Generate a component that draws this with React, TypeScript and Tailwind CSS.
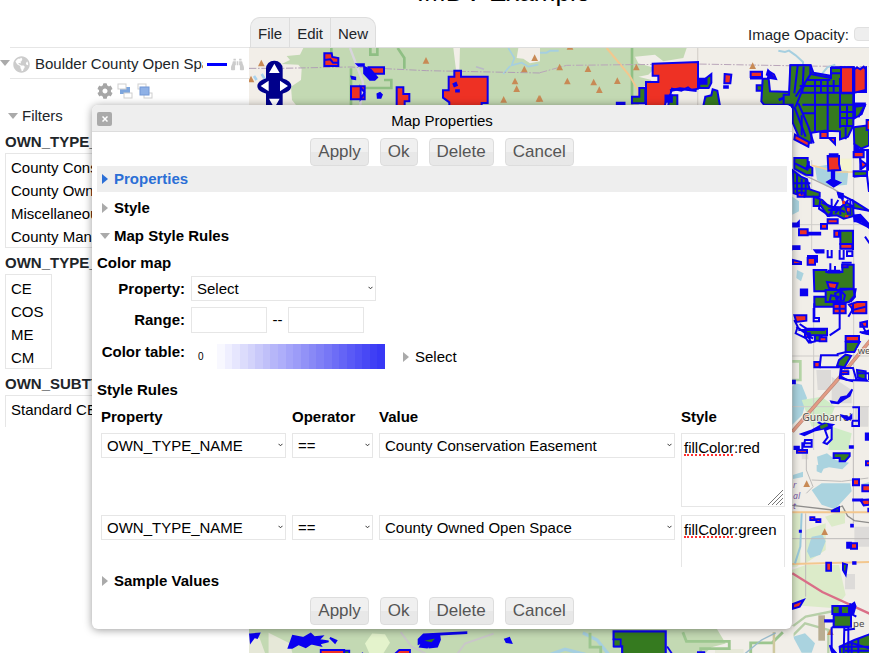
import React from 'react';
import { FaCog, FaGlobeAmericas, FaBinoculars } from 'react-icons/fa';

const BLUE = '#0a00f0';
const RED = '#ee3124';
const GREEN = '#357a1f';

function Caret({ open, color = '#aaaaaa' }: { open?: boolean; color?: string }) {
  return (
    <svg width="10" height="10" viewBox="0 0 10 10" className="shrink-0" fill={color} aria-hidden="true">
      {open ? <path d="M0 2h10L5 8z" /> : <path d="M2 0v10l6-5z" />}
    </svg>
  );
}

function Peaks({ at, s = 1 }: { at: number[][]; s?: number }) {
  return (
    <g fill="#c88a55">
      {at.map(([x, y]) => (
        <path key={`${x}-${y}`} d={`M${x} ${y - 11 * s}l${10 * s} ${20 * s}h${-20 * s}z`} />
      ))}
    </g>
  );
}

function NorthMap() {
  return (
    <g>
      <g transform="translate(240 0) scale(.33333)">
        <path d="M27 144H1400V330H27z" fill="#c3d9b3" />
        <path d="M27 144H190l-10 20-40 4 10 12-25 12 50 2 10 12-2 34-30 20 3 40 24 30H27z" fill="#f2eee8" />
        <path d="M640 144h20l-2 65h-10zM835 144h65v40l-30 6-20-14-20-2z" fill="#f2eee8" />
        <path d="M805 144l18 30-8 22 30-8 20 12 30-6M790 222l20-24" fill="none" stroke="#a6cfe0" strokeWidth="5" />
        <path d="M330 144l38 100 2 20-12 66" fill="none" stroke="#d8d5dc" strokeWidth="7" />
        <path d="M274 144v44M333 205v110M391 144v20h21v-20M473 144l20 30v32M366 264h88v-24h-22" fill="none" stroke="#8fbf84" strokeWidth="8" />
        <path d="M27 205H120L330 201 560 212 900 219" fill="none" stroke="#b09fb5" strokeWidth="3" strokeDasharray="22 5 5 5" />
        <path d="M708 200l24 8" stroke="#b8b9c6" strokeWidth="5" />
        <path d="M42 228l8 12M65 222l10 16" stroke="#a8d2ee" strokeWidth="8" />
        <Peaks at={[[64, 190], [33, 238], [558, 182], [884, 174], [853, 208], [825, 244], [830, 267], [791, 299], [897, 296]]} />
        <g fill={RED} stroke={BLUE} strokeWidth="6">
          <path d="M253 160h22l2 11 18 3v24h-42zM253 180l18-2 8 10h16" />
          <path d="M386 202h46v19h-40zM333 259h41v39h-41zM362 262v34l12-18z" />
          <path d="M470 262h20v20h18v22h-14v14h-24z" />
          <path d="M643 212h20v18h80v79h-18v12H628v-14l-19-14v-22h17v-41h17z" />
        </g>
        <g fill={BLUE} stroke={BLUE} strokeWidth="5">
          <path d="M350 192h22v6h-16zM372 200l20 8 20 24-8 8h-14l-18-20zM334 230l12 2v6l-10-2zM412 282l8-4 6 6-4 10h-9zM640 252l8-4 3 8-8 3zM648 270h9v5h-9z" />
        </g>
        <g fill="#00008b">
          <rect x="78" y="182" width="50" height="160" rx="24" />
          <ellipse cx="103" cy="258" rx="51" ry="27" />
        </g>
        <path d="M103 191l16 28H87zM62 258l24-16v32zM144 258l-24-16v32zM87 296h32l-16 28z" fill="#fff" />
      </g>
      <g transform="translate(540 0) scale(.33333)">
        <path d="M0 144H1000V330H0z" fill="#f1eee8" />
        <path d="M0 144H440l-10 30-60 10-25-20-60 6 10 20 50 14-20 20-30 6 40 10-35 30-5 60H0z" fill="#c3d9b3" />
        <path d="M276 144v170" stroke="#8fbf84" strokeWidth="8" />
        <path d="M200 144l68 82 28 48-10 40" fill="none" stroke="#f3c78e" strokeWidth="6" />
        <path d="M473 144v180" stroke="#d9d5cf" strokeWidth="4" />
        <path d="M0 218l80-22 390-4 320 6 200 2" fill="none" stroke="#b9a5b9" strokeWidth="3" strokeDasharray="22 5 5 5" />
        <path d="M0 158h20l10-6h26M715 152l20 4 12-4 20 14 22 20v10M846 222l16-20 24-8" fill="none" stroke="#a6cfe0" strokeWidth="6" />
        <Peaks at={[[90, 140], [59, 202], [144, 207], [289, 202], [82, 244], [161, 247], [232, 243], [178, 270], [0, 296], [638, 198]]} />
        <g stroke={BLUE} strokeWidth="6">
          <path d="M338 191l136-5v80l-20 4-10-8-20 10-28-6-6 22-10 8-8 30h-54v-80h37v-19h-17z" fill={RED} />
          <path d="M554 222l20 2-3 26h-18zM632 215h34v16h-34zM688 215l14 8 6 14-24-4z" fill={RED} />
          <path d="M276 290h22v-26h18v46h-40zM390 286h22v34h-28zM478 238l18-2 18-14v26l-8 16h-28zM496 290l18-4 4-18 14 4 8 46h-50z" fill={GREEN} />
          <path d="M668 236h18l4 38 60 2v38H672l-8-10zM650 256h16v16h-16z" fill={GREEN} />
          <path d="M752 196h60l8 22 56 10v-26h26v74h40v54H764l-16-18z" fill={GREEN} />
          <path d="M770 200l-8 110M790 198l-8 120M815 215l-50 70M782 240h90M790 262h76M866 228v90M784 280h160" fill="none" />
          <path d="M902 202h40v74h-40zM946 210l32-8v74h-32z" fill={RED} />
        </g>
        <path d="M230 308h24v8h-24zM552 258h12v6h-12zM684 210l18 24-22-10zM630 236h36M476 236h24v16h-24zM376 286h20v20h-20z" fill={BLUE} stroke={BLUE} strokeWidth="5" />
        <path d="M390 272l30-6 50 6M716 300l50-20" fill="none" stroke={BLUE} strokeWidth="8" />
      </g>
    </g>
  );
}

function EastMap() {
  return (
    <g>
      <g transform="translate(785 50) scale(.33333)">
        <path d="M24 160H256V600H24z" fill="#f1eee8" />
        <path d="M206 200v400M80 330v270M22 524h230" stroke="#d0cdca" strokeWidth="3" fill="none" />
        <path d="M90 350l40-6 60 20-4 40-60 6-30-20zM22 440l20 14v30l-20 10z" fill="#aad3df" />
        <path d="M166 326h34v36h-34z" fill="#f4f3cf" />
        <path d="M80 346l80 20 90 0" stroke="#f5cf98" strokeWidth="5" fill="none" />
        <path d="M24 360l120 56 110 70" stroke="#aaa8a8" strokeWidth="4" fill="none" />
        <g fill={GREEN} stroke={BLUE} strokeWidth="6">
          <path d="M16 46h60v26l62 12V54h32v76h35v96l-16 34-24 8v-24l-46-2-40 6v30h-30l-26-60V164H-4v-30h16z" />
          <path d="M38 48L28 130M56 50l-4 80M76 74l-44 66M90 90v158M128 90v154M165 84v150M46 128h160M52 164h152M50 190h40M168 186h36M44 108h120M66 90h70M138 70h30M186 168v60M168 204h36M168 228h36M60 100l-28 70M40 160l30 70 16 50M28 170l34 90M146 90v38M108 90v36" fill="none" />
          <path d="M210 170l30-4-10 26-20 12zM206 232l46-6v60l-24 10-20-14zM28 324h40v22l14 8v22l-20-2-34-18z" />
          <path d="M24 362l24 18 18 8 8 30 30 10v12H60L26 430zM86 440l26 10 20 20 34 2 20-14 18 12 2 28-30 8-20-10-28 2-20-30H86zM204 452l48 30-46-8zM166 542h38v40h-38zM206 364h40v14h-40z" />
        </g>
        <g fill={RED} stroke={BLUE} strokeWidth="6">
          <path d="M168 52h36v76h-36zM208 58l8-6 10 6 10-8 6 8v62l-34 8zM30 254l42 22-2 14-42-22zM106 246h22v18h-22zM132 264h18v18zM128 318h34v24l4 18-36 2zM206 306h30v16h-30zM226 330l20 14-16 12zM38 428h20v12H38zM128 508h30v12h-30zM42 538h26v18H42zM108 522h18v14h-18zM148 542h14v18h-14zM166 582h36v14h-36zM245 210h12v30h-12z" />
        </g>
        <g fill={BLUE} stroke={BLUE} strokeWidth="5">
          <path d="M134 312h24v8h-24zM140 362v26l-14 8 20 14 20-12-18-8v-28zM24 520h12l6-6v16H24zM70 548h36v6H70zM24 588h20v10H24zM206 496l20-2 24 26v12l-22-18h-20zM208 284l16 16-16 6zM246 300h6v60h-6zM158 428l16 4v14l-12-4zM206 160h34v6h-34zM72 334v20h-8z" />
        </g>
        <path d="M30 340l40 20M36 370v60M50 386v50M26 400h50M26 416h48M62 390v48M140 446v50M160 450l-30 50M170 444l20 50M190 450l-40 40M110 458l70 28M158 430l46 22M196 446v50M178 470h26M106 450l-4 26 30 20M130 480h36v14M226 320v40M206 380l40-4 6 50M208 510l44 22M240 166l-20 36M220 300h32M50 196v60M182 232v36M240 560l14 20M204 540v60" fill="none" stroke={BLUE} strokeWidth="6" />
        <path d="M172 452h8v10h-8zM186 474h8v10h-8zM180 496h10v6h-10z" fill={RED} />
      </g>
      <g transform="translate(785 250) scale(.33333)">
        <path d="M24 0H256V610H24z" fill="#f1eee8" />
        <path d="M94 360h44v60h-40zM140 380l60 40v40h-60zM210 470l40 0v60h-40z" fill="#dcdad8" />
        <path d="M30 400l20 4 16 40-14 50-30 30V410zM36 60l20 10-8 24-14-10z" fill="#aad3df" />
        <path d="M50 450l60-10 40 30-20 50-50 10zM140 530l60 20-10 50h-60z" fill="#cfecc6" />
        <path d="M22 334h24v56H22" fill="none" stroke="#b5d5a6" strokeWidth="8" />
        <path d="M206 0v600M86 170v430M22 318h230M22 470h230" stroke="#cfccc9" strokeWidth="3" fill="none" />
        <path d="M22 545L170 375l86-104" fill="none" stroke="#b9897b" strokeWidth="11" />
        <path d="M22 545L170 375l86-104" fill="none" stroke="#e39b84" strokeWidth="7" />
        <g fill={GREEN} stroke={BLUE} strokeWidth="6">
          <path d="M86 60h38v6h48V44h34v72h-40v54H88v-30h34v-16H88zM122 120h44v36h-44zM168 120l26-2 18 0-4 20-16 18-24 4zM138 136l22 4-4 14h-22zM150 130l18-8 12 14-4 16-20 2zM62 236h64v20H62zM90 256h20v16H90zM182 276h42l-16 30h-26zM162 330l20-16 16 4-20 34-22-4zM216 360l26 4v26l-24-8z" />
          <path d="M170 354h34l10 34h28l4 4-60-2-18-10z" fill="none" />
        </g>
        <g fill={RED} stroke={BLUE} strokeWidth="6">
          <path d="M68 24h22v20H68zM126 96l32 4-6 18-20-4zM28 196h36v16l-30 4zM104 262h20v12h-20zM182 258h40v16h-40zM192 164l24-8 28 0v34h-40l-4-16zM146 162h36v28h-36zM88 336h16v16H88zM226 218l20-4v16h-20zM172 44h16v8h-16zM24 30l24 6v6H24zM230 248l20-6v10zM60 250h14v12H60zM168 364h22v8h-22z" />
        </g>
        <g fill={BLUE} stroke={BLUE} strokeWidth="5">
          <path d="M47 118h20v18H47zM88 0h28v8H94zM130 62h34v6h-34zM22 392h8v8h-8z" />
          <path d="M138 454l20 4 10-16 18-4 16-20-8 20-14 8-20 14-20-2zM48 552l30-10 40-22 26 4-16 10-40 8-30 14zM28 590h14v10H28zM194 588h10v6h-10zM242 550h12v20h-12z" />
        </g>
        <path d="M128 0v22h12V0M164 0v26h12V0M186 4h16v14h-16zM66 18h30v20M136 40v22M150 48v16M170 38h30M28 210l10 20-6 20 30 14 10 14 20-4M34 230l50 36M60 240l20 40M40 240h80M44 222l20 14M74 250v28M98 516l20 10 12-4M60 570h20v20H56zM52 600v-20h28M120 540l20-8v36l-14 14-10-4 12-16zM202 472h20v56h-20v-16h20M164 156v80l-30 20M88 160v44h14v10H86v-40M104 352l4-36h50v-4l26-6M104 352h60M168 350l-4 34 40 10M190 200l12-20 40-10M146 176h36M164 162v28M206 120l4 20-14 16M230 220l14 30-20-4M204 160v30M216 370h36v20" fill="none" stroke={BLUE} strokeWidth="6" />
        <path d="M104 528l22-8 4 8-22 10z" fill={GREEN} />
        <g fontFamily="Noto Sans" fill="#4e4c4a" stroke="#f6f3ee" strokeWidth="4" paintOrder="stroke">
          <text x="52" y="514" fontSize="31">Gunbarrel</text>
          <text x="218" y="313" fontSize="28">we</text>
        </g>
        <path d="M164 492l16 4 12 4 10-10v18l-16 4-16-10z" fill={BLUE} />
      </g>
      <g transform="translate(785 450) scale(.33333)">
        <path d="M24 0H256V612H24z" fill="#f1eee8" />
        <path d="M22 190h24v150l-10 10H22zM120 200l60-20v40l-40 10zM62 345h100l20 90-30 40-132-10V360zM62 240l60-20v80l-60 40z" fill="#dcebc9" />
        <path d="M96 20l30-10 26 20 40 8-20 20-40-6-30 8zM80 120l30-20 86 0 4 24-50 54-40-14zM80 260l32-6 10 20-16 40-30 10-10-20zM24 75l30-10v16l-30 6zM95 44l24 6-10 20-14-6zM228 102l28-6v16z" fill="#aad3df" />
        <path d="M208 230h44v60h-44zM180 372h30v46h-30zM50 4h20v24H50z" fill="#dddbd9" />
        <path d="M64 0v60l20 50-20 20M22 266h230M205 0v220M62 190v250M80 90l90 4 80-10" fill="none" stroke="#bdbbb9" strokeWidth="3" />
        <path d="M22 166l120 14 30-12 16 30 20 14 44 6" fill="none" stroke="#8e8d8b" strokeWidth="4" />
        <path d="M22 187h234M22 342l234-6" stroke="#f3c78e" strokeWidth="6" />
        <path d="M50 190l-4 100-16 50" fill="none" stroke="#9ac9dc" strokeWidth="6" />
        <path d="M22 370l90 56 144 66" fill="none" stroke="#da6e87" strokeWidth="7" />
        <path d="M22 530l40-30 100-20M0 580l60-60 70 20v70" fill="none" stroke="#b7cfa8" strokeWidth="7" />
        <path d="M24 560l36-10 30 30-10 28H50z" fill="#aad3df" />
        <path d="M100 496h20v76h-20z" fill="#b9ad92" />
        <Peaks at={[[65, 102], [119, 246], [136, 546]]} />
        <g fill={RED} stroke={BLUE} strokeWidth="6">
          <path d="M204 88h18v18h-18zM232 106h24v18h-24zM226 150l28-2v16l-18 2zM243 34h12v12h-12zM124 338h14v24h-14zM198 280h18v16h-18zM36 0h30v8H36zM76 202h12v8H76zM94 208h12v8H94zM24 462l32-12-12 20-20 6z" />
        </g>
        <g fill={GREEN} stroke={BLUE} strokeWidth="6">
          <path d="M146 10h48v8l-14 16h-16v-10h-18zM138 184l24-12v12zM174 340l12 4-4 30-8-14zM142 468h22v24h-22zM168 468h24v24h-24zM146 496h52v34h-52zM250 176h8v8h-8z" />
          <path d="M164 590l44-20 48-18v64h-90z" />
          <path d="M200 576v40M220 564v50M164 590h92M190 576l66 20M180 602h76" fill="none" />
        </g>
        <g fill={BLUE} stroke={BLUE} strokeWidth="5">
          <path d="M198 224h6v6h-6zM44 242h4v4h-4zM204 336h8v6h-8zM186 278h12v16h-12zM204 148h28v4h-28zM194 468l14-10 4 10-6 22-8 6zM120 510h26v5h-26zM134 586l20 24h-12z" />
        </g>
        <path d="M140 532v70l18 12M178 532h12v80h-14zM140 532h40M196 460v30l18 10M180 540l30-4" fill="none" stroke={BLUE} strokeWidth="6" />
        <text x="204" y="530" fontFamily="Noto Sans" fontSize="29" fill="#4e4c4a">pe</text>
        <g fontFamily="Noto Sans" fontStyle="italic" fontSize="26" fill="#7a5aa8">
          <text x="24" y="114">r</text>
          <text x="24" y="146">al</text>
          <text x="24" y="178">t</text>
        </g>
      </g>
    </g>
  );
}

function SouthMap() {
  return (
    <g transform="translate(240 590) scale(.35714)">
      <path d="M25 100H1480V190H25z" fill="#c3d9b3" />
      <path d="M1330 100h220v90h-220l-30-10 20-20 40-10z" fill="#f1eee8" />
      <path d="M25 125l30 10 20 55H25zM80 120l60 30 10 40H80zM1330 165h80v25h-80z" fill="#e6e8d8" />
      <path d="M350 150l20-28 36 2 14 24-24 38h-30z" fill="#e4f3cc" />
      <path d="M960 120l40 20 40 50M870 180l40-14 80 20" fill="none" stroke="#a6cfe0" strokeWidth="9" />
      <path d="M980 120v40h30v30M1240 118l10 26h120v20h-80v26M1520 118l-30 30h-60v40" fill="none" stroke="#9cc68f" strokeWidth="8" />
      <path d="M450 118l30 40 40 20M600 190l30-40 80-28M680 190q20-20 40 0" fill="none" stroke="#c9c6c9" strokeWidth="5" />
      <path d="M1495 118v70" stroke="#cfc99f" strokeWidth="7" />
      <path d="M1400 190l60-50 40-20" fill="none" stroke="#9bbccc" strokeWidth="4" />
      <g fill={BLUE} stroke={BLUE} strokeWidth="5" strokeLinejoin="miter">
        <path d="M28 124l26-2-6 12-8-2-10 14zM136 162l12-34 30 6 20-12 10 10 22-2-10 10 28 4-26 6 4 6-26-6-16 10-20-8-18 10zM252 134l18 8-4 6zM500 138l14-14 120-6v3l-76 4 2 14-8 20-20 2 4-8-12 8-20-2 6-12-10 4zM742 138l12-4 6 14-14-2zM190 184l30 6M345 176l-20 14" />
      </g>
      <path d="M516 142l30-6-10 10z" fill={GREEN} />
      <path d="M226 168h66v24h-66zM430 182l16-14h30v22h-46zM1196 158l16 24" fill={RED} stroke={BLUE} strokeWidth="5" />
      <path d="M1046 116h146v68h-24l-10 8-20-12-10 10h-58v-32h-22v-20h-2z" fill={GREEN} stroke={BLUE} strokeWidth="6" />
      <path d="M1046 138h20v20h-20zM1282 174h18v18h-18zM292 170h14v20h-14z" fill={GREEN} stroke={BLUE} strokeWidth="5" />
    </g>
  );
}

function MapView() {
  return (
    <section aria-label="Map" className="relative min-h-0 flex-1 overflow-hidden border-t border-[#dddddd] bg-[#f1eee8]">
      <svg className="block h-full w-full" viewBox="249 48 620 605" preserveAspectRatio="xMinYMin slice">
        <NorthMap />
        <EastMap />
        <SouthMap />
      </svg>
    </section>
  );
}

function LayerIcon({ front }: { front?: boolean }) {
  return (
    <svg width="16" height="16" viewBox="0 0 16 16" aria-hidden="true">
      {!front && <rect x="3" y="4" width="10" height="7" fill="#7ea6dd" />}
      <rect x="1" y="1" width="8" height="5" fill="#fff" stroke="#cfcfcf" />
      <rect x="7" y="10" width="8" height="5" fill="#fff" stroke="#cfcfcf" />
      {front && <rect x="3" y="4" width="9" height="8" fill="#8fb1e6" stroke="#7398d6" />}
    </svg>
  );
}

function FilterList({ name, options, wide }: { name: string; options: string[]; wide?: boolean }) {
  return (
    <div className="pl-[5px]">
      <label htmlFor={name} className="flex h-[26px] items-center pt-1 font-bold">
        {name}
      </label>
      <select
        id={name}
        multiple
        size={4}
        className={`block h-[95px] appearance-none overflow-hidden border border-[#e6e6e6] bg-white pt-[2px] pl-[3px] text-black outline-none ${wide ? 'w-[230px]' : 'w-[47px]'}`}
      >
        {options.map((o) => (
          <option key={o} className="px-[2px] py-[3px]">
            {o}
          </option>
        ))}
      </select>
    </div>
  );
}

function Sidebar() {
  return (
    <aside className="h-[380px] w-[249px] shrink-0 overflow-hidden text-[#212529]">
      <div className="flex h-8 items-center">
        <button aria-label="Collapse layer" className="w-[10px]">
          <Caret open />
        </button>
        <div className="flex h-full flex-1 items-center border-y border-[#e6e6e6] pt-[2px] pl-[3px]">
          <FaGlobeAmericas size={17} color="#cccccc" className="shrink-0" />
          <span className="ml-[5px] w-[168px] overflow-hidden whitespace-nowrap">Boulder County Open Space</span>
          <span className="ml-1 h-[3px] w-5 bg-[#0000ff]" />
          <FaBinoculars size={13} color="#cccccc" className="ml-[4px]" />
        </div>
      </div>
      <div className="flex h-6 items-center gap-1 pl-[97px]">
        <button aria-label="Settings">
          <FaCog size={16} color="#a6a6a6" />
        </button>
        <button aria-label="Send to back">
          <LayerIcon />
        </button>
        <button aria-label="Bring to front">
          <LayerIcon front />
        </button>
      </div>
      <button className="flex h-6 items-center gap-1 pl-[8px] pt-[2px]">
        <Caret open />
        Filters
      </button>
      <FilterList name="OWN_TYPE_NAME" wide options={['County Conservation', 'County Owned', 'Miscellaneous', 'County Managed']} />
      <FilterList name="OWN_TYPE_CODE" options={['CE', 'COS', 'ME', 'CM']} />
      <FilterList name="OWN_SUBTYPE" wide options={['Standard CE', 'County COS']} />
    </aside>
  );
}

function Picker({ label, options }: { label: string; options: string[] }) {
  return (
    <div className="relative h-[25px]">
      <select aria-label={label} className="h-full w-full appearance-none border border-[#e6e6e6] bg-white pl-[5px] text-black outline-none">
        {options.map((o) => (
          <option key={o}>{o}</option>
        ))}
      </select>
      <svg className="pointer-events-none absolute top-[10px] right-[3px]" width="5" height="4" viewBox="0 0 5 4" fill="none" stroke="#333" aria-hidden="true">
        <path d="M.5 .8l2 2 2-2" />
      </svg>
    </div>
  );
}

function ButtonRow() {
  return (
    <div className="flex justify-center gap-[11px]">
      {['Apply', 'Ok', 'Delete', 'Cancel'].map((t) => (
        <button
          key={t}
          className="h-7 rounded-[4px] border border-[#dddddd] bg-linear-to-b from-[#f0f0f0] from-50% to-[#e8e8e8] to-50% px-[7px] text-[17px] leading-[26px] text-[#555555]"
        >
          {t}
        </button>
      ))}
    </div>
  );
}

function SectionHeader({ title, open, active }: { title: string; open?: boolean; active?: boolean }) {
  return (
    <button
      aria-expanded={!!open}
      className={`flex w-full items-center gap-1 pl-[3px] font-bold ${active ? 'mb-[2px] h-[26px] bg-[#eeeeee] text-[#2b6fd6]' : 'h-7 text-black'}`}
    >
      <Caret open={open} color={active ? '#2b6fd6' : '#aaaaaa'} />
      {title}
    </button>
  );
}

const ramp = [
  '#f8f8ff', '#efefff', '#e6e6fe', '#dcdcfc', '#d3d3fb', '#c9c9fa', '#c0c0f9', '#b6b6f9', '#aeaefa', '#a4a4f9', '#9c9cf8',
  '#9292f7', '#8989f6', '#8080f6', '#7777f6', '#6d6df6', '#6464f6', '#5a5af6', '#5151f6', '#4848f5', '#3f3ff5', '#3838f5',
];

const rules = [
  { value: 'County Conservation Easement', style: 'fillColor:red' },
  { value: 'County Owned Open Space', style: 'fillColor:green' },
];

function StyleCell({ text }: { text: string }) {
  return (
    <div className="relative h-[74px]">
      <textarea
        aria-label="Style"
        defaultValue={text}
        spellCheck={false}
        className="block h-full w-full resize-none overflow-hidden border border-[#e6e6e6] bg-white px-[2px] py-[5px] leading-[18px] outline-none"
      />
      <span className="pointer-events-none absolute top-[21px] left-[3px] w-[49px] border-b-2 border-dotted border-[#ff3030]" />
      <svg className="pointer-events-none absolute right-[2px] bottom-[2px]" width="15" height="15" viewBox="0 0 15 15" stroke="#777" aria-hidden="true">
        <path d="M0 15L15 0M4 15L15 4M8 15l7-7M12 15l3-3" />
      </svg>
    </div>
  );
}

function Dialog() {
  return (
    <div
      role="dialog"
      aria-labelledby="dialog-title"
      className="absolute top-[105px] left-[92px] w-[700px] rounded-[6px] bg-white pb-1 text-black shadow-[0_1px_8px_rgba(0,0,0,0.4)]"
    >
      <div className="relative flex h-[27px] items-center justify-center rounded-t-[6px] border-b border-[#dddddd] bg-[#eeeeee] pt-[5px]">
        <button
          aria-label="Close"
          className="absolute top-[7px] left-[5px] flex h-[14px] w-[15px] items-center justify-center rounded-[2px] bg-[#aaaaaa]"
        >
          <svg width="6" height="6" viewBox="0 0 6 6" stroke="#fff" strokeWidth="1.5" aria-hidden="true">
            <path d="M.5 .5l5 5M5.500 .5l-5 5" />
          </svg>
        </button>
        <h2 id="dialog-title">Map Properties</h2>
      </div>
      <div className="px-[5px] pt-[6px]">
        <ButtonRow />
        <SectionHeader title="Properties" active />
        <SectionHeader title="Style" />
        <SectionHeader title="Map Style Rules" open />
        <div className="h-[317px] overflow-hidden">
          <h3 className="h-[26px] leading-[26px] font-bold">Color map</h3>
          <div className="grid grid-cols-[88px_1fr] items-center gap-x-[6px] gap-y-[6px]">
            <span className="text-right font-bold">Property:</span>
            <div className="w-[185px]">
              <Picker label="Property" options={['Select']} />
            </div>
            <label htmlFor="range-min" className="text-right font-bold">
              Range:
            </label>
            <div className="flex items-center">
              <input id="range-min" className="h-[26px] w-[76px] border border-[#e6e6e6] outline-none" />
              <span className="w-[21px] text-center">--</span>
              <input aria-label="Range maximum" className="h-[26px] w-[76px] border border-[#e6e6e6] outline-none" />
            </div>
            <span className="self-start pt-[4px] text-right font-bold whitespace-nowrap">Color table:</span>
            <div className="flex items-center pt-[5px]">
              <span className="w-[26px] pl-[7px] text-[10px]">0</span>
              <div className="flex h-[25px] w-[168px]">
                {ramp.map((c) => (
                  <span key={c} className="flex-1" style={{ backgroundColor: c }} />
                ))}
              </div>
              <button className="ml-[16px] flex items-center gap-1">
                <Caret />
                Select
              </button>
            </div>
          </div>
          <h3 className="mt-2 h-[26px] leading-[26px] font-bold">Style Rules</h3>
          <table className="ml-1 w-[684px] table-fixed border-collapse text-left align-top">
            <thead>
              <tr className="h-[30px]">
                <th className="w-[191px] pb-[3px]">Property</th>
                <th className="w-[87px] pb-[3px]">Operator</th>
                <th className="pb-[3px]">Value</th>
                <th className="w-[104px] pb-[3px]">Style</th>
              </tr>
            </thead>
            <tbody>
              {rules.map((r) => (
                <tr key={r.value} className="align-top">
                  <td className="pr-[6px] pb-2">
                    <Picker label="Property" options={['OWN_TYPE_NAME']} />
                  </td>
                  <td className="pr-[6px] pb-2">
                    <Picker label="Operator" options={['==']} />
                  </td>
                  <td className="pr-[6px] pb-2">
                    <Picker label="Value" options={[r.value]} />
                  </td>
                  <td className="pb-2">
                    <StyleCell text={r.style} />
                  </td>
                </tr>
              ))}
            </tbody>
          </table>
        </div>
        <SectionHeader title="Sample Values" />
        <div className="pt-[2px]">
          <ButtonRow />
        </div>
      </div>
    </div>
  );
}

export default function App() {
  return (
    <div className="relative flex h-screen flex-col overflow-hidden bg-white font-['Liberation_Sans',Arial,sans-serif] text-[15px] leading-[18px] text-[#212529]">
      <header className="h-[17px] shrink-0 pl-[138px]">
        <h1 className="-mt-[21px] text-center text-[26px] leading-none font-medium text-black">IMDV Example</h1>
      </header>
      <div className="flex h-[30px] shrink-0 items-center pl-[250px]">
        <nav className="flex h-full overflow-hidden rounded-t-[10px] border border-b-0 border-[#dddddd] bg-[#efefef]">
          {['File', 'Edit', 'New'].map((m) => (
            <button key={m} className="border-r border-[#dddddd] px-[7px] pt-[3px] last:border-r-0">
              {m}
            </button>
          ))}
        </nav>
        <div className="-mr-[90px] ml-auto flex shrink-0 items-center gap-[5px] pt-[6px]">
          <label htmlFor="opacity">Image Opacity:</label>
          <input id="opacity" type="range" defaultValue={100} className="mb-[2px] h-[14px] w-[105px] appearance-none rounded-[4px] border border-[#e0e0e0] bg-[#eeeeee]" />
        </div>
      </div>
      <main className="flex min-h-0 flex-1">
        <Sidebar />
        <MapView />
      </main>
      <Dialog />
    </div>
  );
}
